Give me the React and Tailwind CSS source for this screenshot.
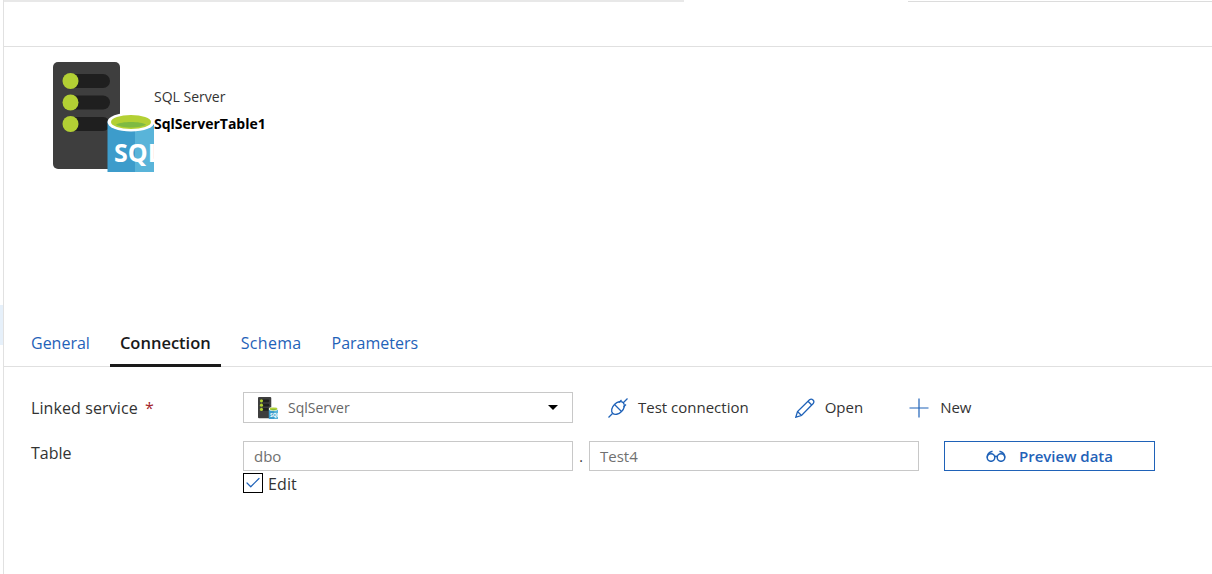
import { Check } from "lucide-react";

function SqlIcon({ className }) {
  return (
    <svg viewBox="0 0 101 110" className={className}>
      <rect x="0" y="0" width="67" height="107" rx="5" fill="#3e3e3e" />
      <rect x="10" y="12" width="47" height="14" rx="7" fill="#1f1f1f" />
      <rect x="10" y="33.500" width="47" height="14" rx="7" fill="#1f1f1f" />
      <rect x="10" y="55" width="47" height="14" rx="7" fill="#1f1f1f" />
      <circle cx="17.500" cy="19" r="8" fill="#b3d034" />
      <circle cx="17.500" cy="40.500" r="8" fill="#b3d034" />
      <circle cx="17.500" cy="62" r="8" fill="#b3d034" />
      <path d="M54.500 60 C54.500 50 101 50 101 60 L101 110 L54.500 110 Z" fill="#3d9ccb" />
      <path d="M82 66 L101 64 L101 110 L82 110 Z" fill="#59b4d9" />
      <ellipse cx="78" cy="60" rx="23.500" ry="9.500" fill="#ffffff" />
      <ellipse cx="78" cy="60" rx="20" ry="7" fill="#b3d034" />
      <path d="M63 62.500 C68 59 88 59 93 62.500 C88 66.500 68 66.500 63 62.500 Z" fill="#7fba42" />
      <text x="61" y="100" fontFamily="'Open Sans', sans-serif" fontWeight="700" fontSize="25" fill="#ffffff">
        SQL
      </text>
    </svg>
  );
}

function Plug() {
  return (
    <svg viewBox="0 0 20 20" className="w-5 h-5 text-[#1f62b8]" fill="none" stroke="currentColor" strokeWidth="1.300">
      <path d="M0.500 19.500 L4.500 15.500" />
      <path d="M15 5 L19.500 0.500" />
      <ellipse cx="10" cy="10" rx="7.500" ry="5" transform="rotate(-45 10 10)" />
      <path d="M6.500 6.500 L13.500 13.500" />
      <path d="M11 4.500 L13.500 2" />
      <path d="M15.500 9 L18 6.500" />
    </svg>
  );
}

function Pencil() {
  return (
    <svg viewBox="0 0 20 20" className="w-5 h-5 text-[#1f62b8]" fill="none" stroke="currentColor" strokeWidth="1.300">
      <path d="M0.800 19.200 L2.500 13.500 L14.500 1.800 C15.500 1 17 1 18 2 C19 3 19 4.500 18.200 5.500 L6.500 17.500 Z" />
      <path d="M2.500 13.500 L6.500 17.500" />
      <path d="M13 3.300 L16.700 7" />
    </svg>
  );
}

function Plus() {
  return (
    <svg viewBox="0 0 20 20" className="w-5 h-5 text-[#1f62b8]" fill="none" stroke="currentColor" strokeWidth="1.200">
      <path d="M10 0.500 V19.500 M0.500 10 H19.500" />
    </svg>
  );
}

function Glasses() {
  return (
    <svg viewBox="0 0 20 12" className="w-5 h-3 text-[#1f62b8]" fill="none" stroke="currentColor" strokeWidth="1.500">
      <circle cx="5" cy="7.500" r="3.800" />
      <circle cx="15" cy="7.500" r="3.800" />
      <path d="M8.800 7 C9.300 6 10.700 6 11.200 7" />
      <path d="M1.200 7.500 C1.200 4.500 3.500 2 6.500 1.200" />
      <path d="M18.800 7.500 C18.800 4.500 16.500 2 13.500 1.200" />
    </svg>
  );
}

const tabs = [
  { name: "General", style: "text-[16px] text-[#1f62b8]" },
  { name: "Connection", style: "text-[16.500px] font-semibold text-[#1a1a1a] border-b-[3px] border-[#1a1a1a] pt-[3px]" },
  { name: "Schema", style: "text-[16px] tracking-[0.3px] text-[#1f62b8]" },
  { name: "Parameters", style: "text-[16px] text-[#1f62b8]" },
];

export default function App() {
  return (
    <div className="w-[1212px] h-[574px] flex bg-white overflow-hidden text-[#333333] font-['Open_Sans',sans-serif]">
      {/* left edge, the selected blade shows through here */}
      <div className="w-[3px] shrink-0 pt-[305px]">
        <div className="h-[40px] bg-[#e6f0fa]" />
      </div>

      <div className="flex-1 border-l border-[#e1e1e1] flex flex-col">
        <div className="h-[47px] shrink-0 border-b border-[#e0e0e0]">
          <div className="flex items-start">
            <div className="w-[680px] h-[2px] bg-[#e8e8e8]" />
            <div className="w-[224px]" />
            <div className="flex-1 h-[1px] mt-[1px] bg-[#dcdcdc]" />
          </div>
        </div>

        <div className="h-[272px] shrink-0 flex pl-[49px] pt-[15px]">
          <SqlIcon className="w-[101px] h-[110px] shrink-0" />
          <div className="flex flex-col">
            <div className="text-[14px] leading-[20px] mt-[25px] text-[#333333]">SQL Server</div>
            <div className="text-[14px] leading-[20px] mt-[7px] font-bold text-black">SqlServerTable1</div>
          </div>
        </div>

        <div className="h-[48px] shrink-0 flex gap-[10px] border-b border-[#e0e0e0] pl-[17px]">
          {tabs.map((tab) => (
            <div key={tab.name} className={`h-[48px] flex items-center px-[10px] ${tab.style}`}>
              {tab.name}
            </div>
          ))}
        </div>

        <div className="pl-[27px] pt-[25px]">
          <div className="flex items-center h-[31px]">
            <div className="w-[212px] text-[16px] tracking-[0.1px]">
              Linked service <span className="text-[#a4262c] ml-[3px]">*</span>
            </div>
            <div className="w-[330px] h-[31px] border border-[#c8c8c8] flex items-center pl-[14px] pr-[14px]">
              <SqlIcon className="w-[20px] h-[22px] shrink-0" />
              <span className="ml-[10px] text-[14px] text-[#666666] flex-1">SqlServer</span>
              <svg viewBox="0 0 10 5" className="w-[10px] h-[5px] text-black" fill="currentColor">
                <path d="M0 0 H10 L5 5 Z" />
              </svg>
            </div>
            <div className="flex items-center ml-[35px] gap-[10px] text-[15px]">
              <Plug />
              <span>Test connection</span>
            </div>
            <div className="flex items-center ml-[46px] gap-[10px] text-[15px]">
              <Pencil />
              <span>Open</span>
            </div>
            <div className="flex items-center ml-[46px] gap-[11px] text-[15px]">
              <Plus />
              <span>New</span>
            </div>
          </div>

          <div className="flex mt-[18px]">
            <div className="w-[212px] text-[16px] leading-[24px]">Table</div>
            <div className="flex flex-col">
              <div className="flex items-center">
                <div className="w-[330px] h-[30px] border border-[#c8c8c8] flex items-center px-[10px] text-[15px] text-[#707070]">dbo</div>
                <div className="w-[16px] text-center text-[14px]">.</div>
                <div className="w-[330px] h-[30px] border border-[#c8c8c8] flex items-center px-[10px] text-[15px] text-[#707070]">Test4</div>
                <button className="ml-[25px] w-[211px] h-[30px] border border-[#1f62b8] flex items-center justify-center gap-[13px] text-[15px] font-semibold text-[#1f62b8]">
                  <Glasses />
                  Preview data
                </button>
              </div>
              <div className="flex items-center mt-[1px]">
                <div className="w-[20px] h-[20px] border border-black flex items-center justify-center">
                  <Check className="w-[18px] h-[18px] text-[#1f62b8]" strokeWidth={1.6} />
                </div>
                <span className="ml-[5px] pt-[2px] text-[16px] leading-[20px] tracking-[0.1px]">Edit</span>
              </div>
            </div>
          </div>
        </div>
      </div>
    </div>
  );
}
